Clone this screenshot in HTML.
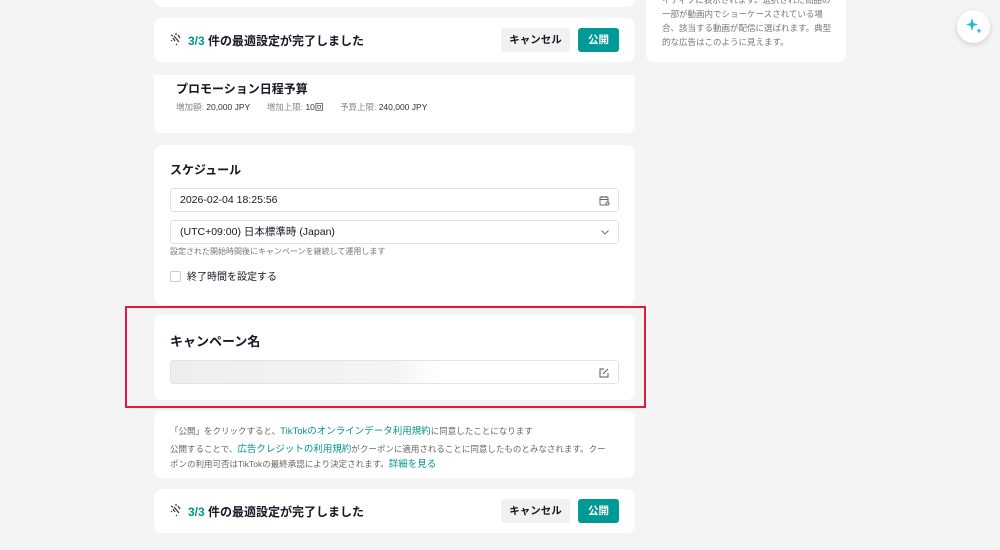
<!DOCTYPE html>
<html><head><meta charset="utf-8"><style>
*{box-sizing:border-box;margin:0;padding:0}
body{width:1000px;height:550px;background:#f4f4f4;font-family:"Liberation Sans","Noto Sans CJK JP",sans-serif;color:#161823;position:relative;overflow:hidden}
.card{position:absolute;left:154px;width:481px;background:#fff;border-radius:8px}
.t{position:absolute;white-space:nowrap}
.btn{position:absolute;height:24px;border-radius:3px;font-size:10.5px;font-weight:bold;text-align:center;line-height:24px}
.cancel{background:#f1f1f2;color:#161823;width:69px}
.pub{background:#009995;color:#fff;width:41px}
.inp{position:absolute;left:16px;width:449px;height:24px;border:1px solid #e3e3e4;border-radius:3px;font-size:10.5px;line-height:22px;padding-left:9px}
.teal{color:#00958f}
</style></head><body>
<div class="card" style="top:-10px;height:17px"></div>
<div class="card" style="top:18px;height:44px">
 <svg class="t" style="left:16px;top:14px" width="12" height="14" viewBox="0 0 12 14" fill="none" stroke="#333" stroke-width="1.2"><path d="M4 4l5 6M3 6l2 3M8 3l2 3M1 3l2 1M6 1v2M2 8l-1 1M6 12l1 1"/></svg>
 <div class="t" style="left:34px;top:14px;font-size:12px;font-weight:bold"><span class="teal">3/3</span> 件の最適設定が完了しました</div>
 <div class="btn cancel" style="left:347px;top:10px">キャンセル</div>
 <div class="btn pub" style="left:424px;top:10px">公開</div>
</div>
<div class="card" style="top:75px;height:58px;border-radius:0 0 8px 8px">
 <div class="t" style="left:22px;top:5px;font-size:12px;font-weight:bold">プロモーション日程予算</div>
 <div class="t" style="left:22px;top:26px;font-size:8.5px;color:#888">増加額: <span style="color:#333">20,000 JPY</span>&nbsp;&nbsp;&nbsp;&nbsp;&nbsp;&nbsp;&nbsp;増加上限: <span style="color:#333">10回</span>&nbsp;&nbsp;&nbsp;&nbsp;&nbsp;&nbsp;&nbsp;予算上限: <span style="color:#333">240,000 JPY</span></div>
</div>
<div class="card" style="top:145px;height:160px">
 <div class="t" style="left:16px;top:16px;font-size:12px;font-weight:bold">スケジュール</div>
 <div class="inp" style="top:43px">2026-02-04 18:25:56
  <svg class="t" style="right:8px;top:6px" width="11" height="11" viewBox="0 0 11 11" fill="none" stroke="#666"><rect x="1" y="2" width="8" height="8" rx="1"/><path d="M3 1v2M7 1v2M1 4.5h8"/><circle cx="8.5" cy="8.5" r="1.5" fill="#fff"/></svg></div>
 <div class="inp" style="top:75px">(UTC+09:00) 日本標準時 (Japan)
  <svg class="t" style="right:9px;top:9px" width="8" height="5" viewBox="0 0 8 5" fill="none" stroke="#777"><path d="M.5.5l3.5 3.5 3.5-3.5"/></svg></div>
 <div class="t" style="left:16px;top:101px;font-size:8px;color:#777">設定された開始時間後にキャンペーンを継続して運用します</div>
 <div class="t" style="left:16px;top:126px;width:11px;height:11px;border:1px solid #ccc;border-radius:2px"></div>
 <div class="t" style="left:33px;top:123px;font-size:10px">終了時間を設定する</div>
</div>
<div class="card" style="top:315px;height:85px">
 <div class="t" style="left:16px;top:16px;font-size:13px;font-weight:bold">キャンペーン名</div>
 <div class="inp" style="top:45px;background:linear-gradient(90deg,#eee 0,#f4f4f4 50%,#fff 60%)"><span style="position:absolute;left:266px;top:0;width:181px;height:22px;background:#fff"></span>
  <svg class="t" style="right:9px;top:7px" width="10" height="10" viewBox="0 0 10 10" fill="none" stroke="#555"><path d="M5 1H1v8h8V5M4 6l5-5"/></svg></div>
</div>
<div class="t" style="left:125px;top:306px;width:521px;height:102px;border:2px solid #e8173f"></div>
<div class="card" style="top:411px;height:67px">
 <div class="t" style="left:16px;top:12px;font-size:8.5px;color:#666">「公開」をクリックすると、<span class="teal" style="font-size:9.5px">TikTokのオンラインデータ利用規約</span>に同意したことになります</div>
 <div class="t" style="left:16px;top:31px;font-size:8.5px;color:#666;line-height:15px;width:440px;white-space:normal">公開することで、<span class="teal" style="font-size:9.5px">広告クレジットの利用規約</span>がクーポンに適用されることに同意したものとみなされます。クーポンの利用可否はTikTokの最終承認により決定されます。<span class="teal" style="font-size:9.5px">詳細を見る</span></div>
</div>
<div class="card" style="top:489px;height:44px">
 <svg class="t" style="left:16px;top:14px" width="12" height="14" viewBox="0 0 12 14" fill="none" stroke="#333" stroke-width="1.2"><path d="M4 4l5 6M3 6l2 3M8 3l2 3M1 3l2 1M6 1v2M2 8l-1 1M6 12l1 1"/></svg>
 <div class="t" style="left:34px;top:14px;font-size:12px;font-weight:bold"><span class="teal">3/3</span> 件の最適設定が完了しました</div>
 <div class="btn cancel" style="left:347px;top:10px">キャンセル</div>
 <div class="btn pub" style="left:424px;top:10px">公開</div>
</div>
<div class="t" style="left:646px;top:-10px;width:200px;height:72px;background:#fff;border-radius:8px">
 <div style="position:absolute;left:16px;top:3px;width:176px;font-size:8.5px;line-height:14px;color:#777;white-space:normal">イティフに表示されます。選択された商品の一部が動画内でショーケースされている場合、該当する動画が配信に選ばれます。典型的な広告はこのように見えます。</div>
</div>
<div class="t" style="left:957px;top:10px;width:33px;height:33px;border-radius:50%;background:#fff;box-shadow:0 2px 6px rgba(0,0,0,.15)">
 <svg style="position:absolute;left:8px;top:7px" width="18" height="18" viewBox="0 0 18 18" fill="#22b8e0"><path d="M7 1L8.5 6 13 7.5 8.5 9 7 14 5.5 9 1 7.5 5.5 6z"/><path d="M14 11l.8 2 2 .8-2 .8-.8 2-.8-2-2-.8 2-.8z"/></svg>
</div>
</body></html>
